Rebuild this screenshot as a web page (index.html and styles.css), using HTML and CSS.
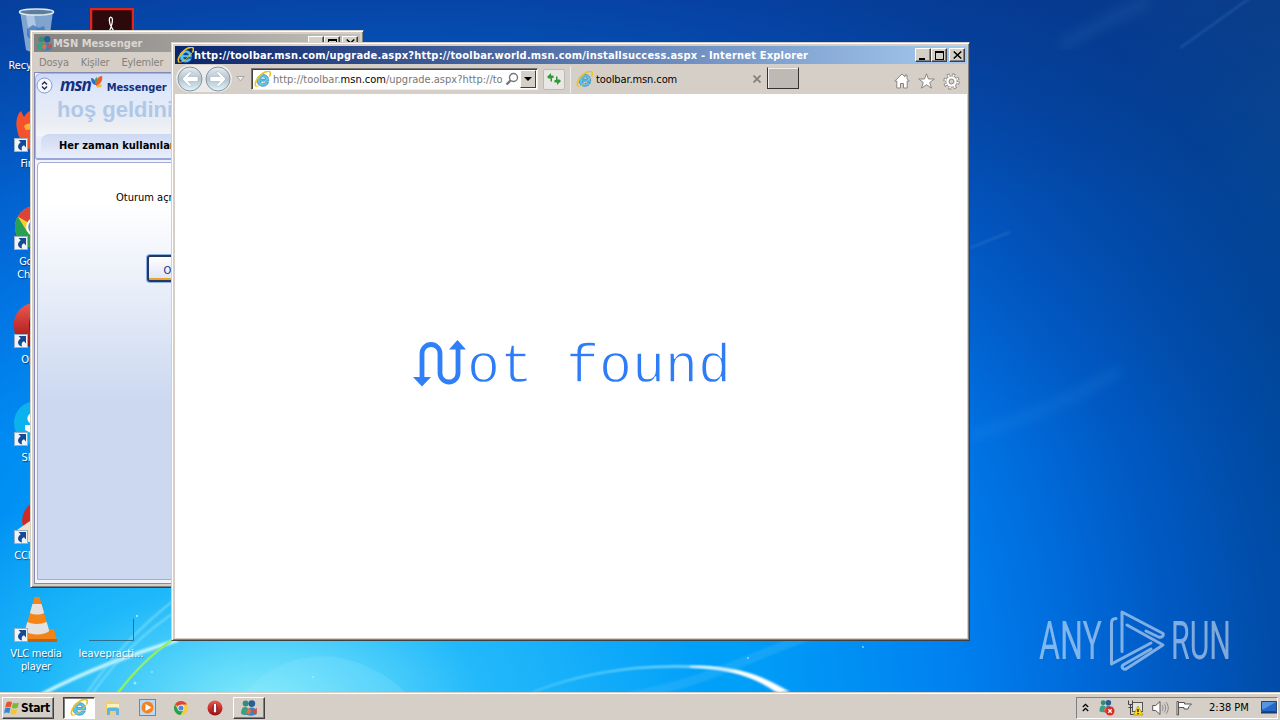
FILE: index.html
```html
<!DOCTYPE html>
<html lang="en">
<head>
    <meta charset="UTF-8">
    <meta name="viewport" content="width=device-width, initial-scale=1.0">
    <title>Desktop</title>
    <link rel="stylesheet" href="styles.css">
</head>
<body>

    <!-- Shared icons -->
    <svg width="0" height="0" class="sprite">
        <symbol id="ie" viewBox="0 0 16 16">
            <path d="M13.9 9.6H6c.2 1.500 1.100 2.300 2.500 2.300 1 0 1.700-.4 2.100-1.100h3c-.8 2.300-2.700 3.600-5.200 3.600-3.300 0-5.600-2.200-5.600-5.500S5.200 3.300 8.500 3.300c3.400 0 5.500 2.300 5.400 6.300zM6.100 7.600h4.800c-.2-1.300-1-2.100-2.400-2.100-1.300 0-2.200.8-2.400 2.100z" fill="#5cc3f0" stroke="#2480c2" stroke-width=".6"/>
            <path d="M2.300 14.500C-.6 12.800 3 6.200 7.200 3 11-.1 15-.6 15.400 1.800c.2 1-.2 2.100-.8 3" fill="none" stroke="#f2c21b" stroke-width="1.500"/>
            <path d="M2.300 14.500C5 14.500 10 11 14.500 5" fill="none" stroke="#f2c21b" stroke-width=".8"/>
        </symbol>
        <symbol id="shortcut" viewBox="0 0 14 14">
            <rect x=".5" y=".5" width="13" height="13" fill="#eef4fa" stroke="#9ab0c4"/>
            <path d="M4.500 2h7.500v7.500L10 7.300C8 8.200 7.200 9.600 8 12.500 3.500 11.500 2.500 7.300 6.700 4.300z" fill="#174a94"/>
        </symbol>
        <symbol id="msn" viewBox="0 0 16 16">
            <circle cx="5" cy="4" r="2.600" fill="#2f8f78"/>
            <path d="M1 13c0-4 1-6 3.500-6S8 9 8 13c-2 1.500-5 1.500-7 0z" fill="#36a184"/>
            <circle cx="10.500" cy="4" r="3" fill="#275f93"/>
            <path d="M6 14c0-4.500 1.500-6.500 4.500-6.500S15 10 15 13c-2 2-6 2.500-9 1z" fill="#3585c4"/>
            <path d="M7.500 8L5.500 12l3 2 1.500-4z" fill="#ee6e35"/>
            <path d="M11 10l4-2v4l-3 1z" fill="#d3503b"/>
        </symbol>
        <symbol id="chrome" viewBox="0 0 16 16">
            <circle cx="8" cy="8" r="7" fill="#f5cd35"/>
            <path d="M8 8L1.900 4.500A7 7 0 0 1 14.100 4.500H8z" fill="#db4437"/>
            <path d="M1.900 4.500A7 7 0 0 0 7.500 15L10.500 10 5 9.500z" fill="#28a052"/>
            <circle cx="8" cy="8" r="3.300" fill="#fff"/>
            <circle cx="8" cy="8" r="2.600" fill="#4a86e8"/>
        </symbol>
        <symbol id="opera" viewBox="0 0 16 16">
            <circle cx="8" cy="8" r="7.500" fill="url(#operaRed)"/>
            <ellipse cx="8" cy="8" rx="2.300" ry="5" fill="#7a0a0d"/>
            <rect x="6.800" y="3.600" width="2.400" height="8.800" rx="1.200" fill="#fff"/>
        </symbol>
        <linearGradient id="operaRed" x1="0" y1="0" x2="0" y2="1">
            <stop offset="0" stop-color="#ee5a52"/>
            <stop offset="1" stop-color="#9c0b10"/>
        </linearGradient>
        <linearGradient id="navGlass" x1="0" y1="0" x2="0" y2="1">
            <stop offset="0" stop-color="#e9edf0"/>
            <stop offset=".5" stop-color="#b5c3cd"/>
            <stop offset="1" stop-color="#dff6fc"/>
        </linearGradient>
    </svg>

    <main class="desktop">
        <svg class="wallpaper" viewBox="0 0 1280 692">
            <defs>
                <filter id="soft"><feGaussianBlur stdDeviation="1"/></filter>
                <filter id="softer"><feGaussianBlur stdDeviation="6"/></filter>
                <linearGradient id="arc" x1="0" y1="0" x2="1" y2="0">
                    <stop offset="0" stop-color="#5fd6ff" stop-opacity=".6"/>
                    <stop offset=".6" stop-color="#a5eaff"/>
                    <stop offset="1" stop-color="#fff"/>
                </linearGradient>
            </defs>
            <path d="M235 705C280 640 360 640 418 705z" fill="#9cecff" opacity=".2"/>
            <path d="M42 694C88 670 130 655 178 640" stroke="#c8f6ff" stroke-width="3.500" fill="none" filter="url(#soft)"/>
            <path d="M86 694C110 660 135 630 178 597M92 694C120 655 145 632 178 610" stroke="#8fe6fb" stroke-width="1.300" fill="none" filter="url(#soft)"/>
            <path d="M117 694C134 672 150 655 175 638" stroke="#8fee6a" stroke-width="2.500" fill="none"/>
            <path d="M533 692C600 666 660 665 700 667 740 669 765 680 782 692" stroke="url(#arc)" stroke-width="1.800" fill="none" filter="url(#soft)"/>
            <path d="M690 666C745 666 765 678 790 692H776C755 678 735 669 690 667z" fill="#fff" filter="url(#soft)"/>
            <path d="M630 696C720 680 770 645 830 630" stroke="#6cc8ff" stroke-width="9" opacity=".2" fill="none" filter="url(#soft)"/>
            <path d="M970 436C1030 418 1080 395 1120 370" stroke="#4ab0ff" stroke-width="9" opacity=".15" fill="none" filter="url(#softer)"/>
            <path d="M970 248L1010 232M1180 48L1250 -2" stroke="#5aa0d8" stroke-width="2" opacity=".25" filter="url(#soft)"/>
            <path d="M1060 45L1150 0" stroke="#4a90c8" stroke-width="12" opacity=".15" filter="url(#softer)"/>
            <g fill="#b9f1ff" opacity=".7">
                <circle cx="135" cy="683" r="1.500"/><circle cx="137" cy="616" r="1.200"/><circle cx="313" cy="677" r="1"/>
                <circle cx="748" cy="658" r="1"/><circle cx="863" cy="647" r="1"/><circle cx="152" cy="672" r="1"/>
            </g>
        </svg>

        <!-- Desktop shortcuts -->
        <div class="shortcuts">
            <div class="shortcut">
                <svg class="shortcut-icon" viewBox="0 0 48 48">
                    <path d="M8 4h33l-5 39c-5 3-17 3-22 0z" fill="#a9c4dc" opacity=".75"/>
                    <path d="M14 8l5 32 9 1-6-33z" fill="#dce9f3" opacity=".5"/>
                    <path d="M15 22l6-4 6 3 5-2 2 8-4 7H20l-5-5z" fill="#2d6fc6" opacity=".7"/>
                    <ellipse cx="24.500" cy="5" rx="17" ry="3" fill="#5c7e9d" stroke="#dfe8ee" stroke-width="1.500"/>
                </svg>
                <p>Recycle Bin</p>
            </div>
            <div class="shortcut">
                <svg class="shortcut-icon" viewBox="0 0 48 48">
                    <path d="M5 24C3 16 6 8 9 6l3 6c2-3 4-6 9-7l10 1c12 3 15 15 12 24s-11 16-19 16S7 38 5 24z" fill="#f4512c"/>
                    <path d="M12 21c4-4 9-2 14-2l-4 5-8 1 3 7z" fill="#ffb13c"/>
                </svg>
                <svg class="link-mark"><use href="#shortcut"/></svg>
                <p>Firefox</p>
            </div>
            <div class="shortcut">
                <svg class="shortcut-icon"><use href="#chrome"/></svg>
                <svg class="link-mark"><use href="#shortcut"/></svg>
                <p>Google Chrome</p>
            </div>
            <div class="shortcut">
                <svg class="shortcut-icon"><use href="#opera"/></svg>
                <svg class="link-mark"><use href="#shortcut"/></svg>
                <p>Opera</p>
            </div>
            <div class="shortcut">
                <svg class="shortcut-icon" viewBox="0 0 48 48">
                    <circle cx="24" cy="24" r="22" fill="#0cb2ee"/>
                    <path d="M31 12c-9-2-18 4-15 10l3 4h-6v5l10 5 13-4z" fill="#fff"/>
                </svg>
                <svg class="link-mark"><use href="#shortcut"/></svg>
                <p>Skype</p>
            </div>
            <div class="shortcut">
                <svg class="shortcut-icon" viewBox="0 0 48 48">
                    <path d="M10 26C10 12 18 6 26 4l14 8-6 24-20-4z" fill="#cf2a25"/>
                    <path d="M5 33l13-9 16 4-8 17H8z" fill="#f1dfc8"/>
                </svg>
                <svg class="link-mark"><use href="#shortcut"/></svg>
                <p>CCleaner</p>
            </div>
            <div class="shortcut">
                <svg class="shortcut-icon" viewBox="0 0 48 48">
                    <path d="M8 34h34l3 12H5z" fill="#f08419"/>
                    <path d="M5 44h40v3H5z" fill="#c8600a"/>
                    <path d="M22.500 2h5l10 35c-5 5-20 5-25 0z" fill="#f58516"/>
                    <path d="M20.500 9h9l2.600 9c-4 2-10 2-14.200 0zM15.300 27c6 2.500 13 2.500 19.400 0l2.600 9c-5 4.500-19 4.500-24.600 0z" fill="#e2e2e2"/>
                </svg>
                <svg class="link-mark"><use href="#shortcut"/></svg>
                <p>VLC media player</p>
            </div>
        </div>

        <div class="acrobat">
            <svg width="44" height="44" viewBox="0 0 44 44">
                <rect x="1" y="1" width="42" height="42" fill="#2c0a0c" stroke="#e5251b" stroke-width="2.500"/>
                <path d="M19 24c2-4 5-13 2.500-14.500S18 14 22 20l3 5" fill="none" stroke="#fff" stroke-width="1.300"/>
            </svg>
        </div>
        <div class="ghost-file">
            <span class="ghost-icon"></span>
            <p>leavepracti...</p>
        </div>

        <!-- Messenger window -->
        <section class="window messenger">
            <header class="titlebar inactive">
                <svg class="title-icon"><use href="#msn"/></svg>
                <h2>MSN Messenger</h2>
                <div class="win-buttons">
                    <span class="win-btn"><i class="glyph-min"></i></span><span class="win-btn"><i class="glyph-max"></i></span><span class="win-btn close"><svg width="9" height="8" viewBox="0 0 9 8"><path d="M.7.500l7.600 7M8.300.500l-7.600 7" stroke="#000" stroke-width="1.500"/></svg></span>
                </div>
            </header>
            <nav class="menu">
                <span>Dosya</span><span>Kişiler</span><span>Eylemler</span>
            </nav>
            <div class="msn-frame">
                <div class="msn-head">
                    <div class="msn-brand">
                        <svg width="17" height="17" viewBox="0 0 17 17">
                            <circle cx="8.500" cy="8.500" r="7.500" fill="#f4f7fd" stroke="#8a98cf"/>
                            <path d="M6 7.500l2.500-2.500L11 7.500M6 9.500l2.500 2.500L11 9.500" fill="none" stroke="#222c4c" stroke-width="1.400"/>
                        </svg>
                        <span class="msn-word">msn</span>
                        <svg class="butterfly" width="12" height="13" viewBox="0 0 12 13">
                            <path d="M5 9C1 9 0 5 0 2c3 0 5 3 5 7z" fill="#2e6fc6"/>
                            <path d="M5 9C3 5 4 2 6 1c1 3 1 6-1 8z" fill="#3fa45a"/>
                            <path d="M5 10C5 4 7 0 11 0c1 4-1 8-6 10z" fill="#ee5c24"/>
                            <path d="M5 11c2-3 5-3 6-2-1 3-3 3-6 2z" fill="#f6b628"/>
                        </svg>
                        <span class="msn-name">Messenger</span>
                    </div>
                    <p class="welcome">hoş geldiniz</p>
                    <p class="msn-tab">Her zaman kullanılan</p>
                </div>
                <div class="msn-body">
                    <p>Oturum açmak</p>
                    <button class="msn-button">Oturum Aç</button>
                </div>
            </div>
        </section>

        <!-- Browser window -->
        <section class="window browser">
            <header class="titlebar">
                <svg class="title-icon"><use href="#ie"/></svg>
                <h2>http://toolbar.msn.com/upgrade.aspx?http://toolbar.world.msn.com/installsuccess.aspx - Internet Explorer</h2>
                <div class="win-buttons">
                    <span class="win-btn"><i class="glyph-min"></i></span><span class="win-btn"><i class="glyph-max"></i></span><span class="win-btn close"><svg width="9" height="8" viewBox="0 0 9 8"><path d="M.7.500l7.600 7M8.300.500l-7.600 7" stroke="#000" stroke-width="1.500"/></svg></span>
                </div>
            </header>
            <div class="toolbar">
                <svg class="nav-buttons" width="58" height="30" viewBox="0 0 58 30">
                    <rect x="1" y="1" width="56" height="27" rx="13.500" fill="#ecebe9"/>
                    <g fill="url(#navGlass)" stroke="#8496a5">
                        <circle cx="15" cy="15" r="12"/>
                        <circle cx="43" cy="15" r="12"/>
                    </g>
                    <g fill="#fff" stroke="#9aacb9" stroke-width=".5">
                        <path d="M7 15l7-7h3.500L13 12.500h10v5H13l4.500 4.500H14z"/>
                        <path d="M51 15l-7-7h-3.500l4.500 4.500H35v5h10L40.500 22H44z"/>
                    </g>
                </svg>
                <svg class="nav-more" width="9" height="6" viewBox="0 0 9 6"><path d="M.8.500h7.400L4.500 5z" fill="#eee" stroke="#aaa6a0"/></svg>
                <div class="address">
                    <svg class="address-icon"><use href="#ie"/></svg>
                    <p>http://toolbar.<b>msn.com</b>/upgrade.aspx?http://to</p>
                    <svg class="search" width="14" height="14" viewBox="0 0 14 14"><circle cx="8.500" cy="5.500" r="4" fill="none" stroke="#777" stroke-width="1.400"/><path d="M5.500 8.500L1.500 12.500" stroke="#777" stroke-width="2.400"/></svg>
                    <span class="dropdown"><i></i></span>
                </div>
                <span class="refresh">
                    <svg width="14" height="14" viewBox="0 0 14 14"><path d="M0 5L4 1v2.500h2.500V6H5v3.500H3.500V6.500H1.500zM14 9l-4 4v-2.500H7.500V8H9V4.500h1.500v3h2z" fill="#2d9a35"/></svg>
                </span>
                <div class="tab">
                    <svg class="tab-icon"><use href="#ie"/></svg>
                    <p>toolbar.msn.com</p>
                    <svg width="8" height="8" viewBox="0 0 8 8"><path d="M.5.500l7 7M7.500.500l-7 7" stroke="#858079" stroke-width="1.800"/></svg>
                </div>
                <span class="new-tab"></span>
                <div class="tools">
                    <svg width="16" height="16" viewBox="0 0 16 16"><path d="M8 1L.8 8h2v7h3.700v-4.500h3V15h3.700V8h2L13 5.800V2h-2v1.900z" fill="#fff" stroke="#8a857f"/></svg>
                    <svg width="17" height="16" viewBox="0 0 17 16"><path d="M8.500.8l2 5.200h5.800l-4.600 3.500 1.800 5.700-5-3.500-5 3.500 1.800-5.700L.7 6h5.800z" fill="#fff" stroke="#8a857f"/></svg>
                    <svg width="17" height="17" viewBox="0 0 17 17">
                        <circle cx="8.500" cy="8.500" r="6.300" fill="none" stroke="#8a857f" stroke-width="3.800" stroke-dasharray="2.600 2.348"/>
                        <circle cx="8.500" cy="8.500" r="6" fill="#8a857f"/>
                        <circle cx="8.500" cy="8.500" r="6.300" fill="none" stroke="#fff" stroke-width="2" stroke-dasharray="1.600 3.348" stroke-dashoffset="-.5"/>
                        <circle cx="8.500" cy="8.500" r="5.200" fill="#fff"/>
                        <circle cx="8.500" cy="8.500" r="2.500" fill="#d4d0c8" stroke="#8a857f"/>
                    </svg>
                </div>
            </div>
            <div class="page">
                <svg width="54" height="48" viewBox="0 0 54 48">
                    <path d="M9 38V13.500a9 9 0 0 1 18 0v19.500a9 9 0 0 0 18 0V9" fill="none" stroke="#2f80f8" stroke-width="4.800"/>
                    <path d="M0 37h18l-9 9.500zM36 9.500h17L44.500 0z" fill="#2f80f8"/>
                </svg>
                <h1>ot found</h1>
            </div>
        </section>

        <!-- Watermark -->
        <svg class="watermark" width="196" height="66" viewBox="0 0 196 66">
            <g opacity=".5">
                <text x="1" y="51" textLength="63" lengthAdjust="spacingAndGlyphs">ANY</text>
                <g fill="none" stroke="#fff" stroke-width="3" stroke-linejoin="round" stroke-linecap="round">
                    <path d="M78 10.500C75 10.500 73.500 12 73.500 15V56L113 35"/>
                    <path d="M84 43.500V4L125 25.500C126 27.500 124 30 120.500 29L108 23"/>
                    <path d="M89 17L125 37 88 61C85 62 83 59 85 57L113 41"/>
                </g>
                <text x="133" y="51" textLength="60" lengthAdjust="spacingAndGlyphs">RUN</text>
            </g>
        </svg>
    </main>

    <footer class="taskbar">
        <button class="start">
            <svg width="16" height="16" viewBox="0 0 16 16">
                <path d="M2.500 2.500C4.500 1 6 1.300 8 2.300L6.700 7.300C4.800 6.300 3 6.500 1.200 7.500z" fill="#e8542a"/>
                <path d="M9 2.700c2 1 4 .8 6-.3l-1.300 5c-2 1.200-4 1.300-6 .3z" fill="#7db83a"/>
                <path d="M1 8.500c2-1.200 3.500-1.200 5.500-.2L5.200 13.300C3.300 12.300 1.700 12.400 0 13.500z" fill="#3a83d2"/>
                <path d="M7.500 8.800c2 1 4 .9 6-.2l-1.300 5c-2 1.200-4 1.200-6 .2z" fill="#f8c62c"/>
            </svg>
            Start
        </button>
        <div class="tasks">
            <span class="task active"><svg width="18" height="18"><use href="#ie"/></svg></span>
            <span class="task">
                <svg width="16" height="16" viewBox="0 0 16 16">
                    <path d="M1 3l1-2h5l1 1.500h6.500V13H1z" fill="#f0cf67"/>
                    <path d="M2 4h12v5H2z" fill="#fbf2bd"/>
                    <path d="M2 14V9.500C2 8 3 7.500 4.500 7.500h7c1.500 0 2.500.5 2.500 2V15h-3v-4H5v4H2z" fill="#62b4dd"/>
                </svg>
            </span>
            <span class="task">
                <svg width="17" height="17" viewBox="0 0 17 17">
                    <rect x=".5" y=".5" width="16" height="16" fill="#b9d9f4" stroke="#4f8fcb"/>
                    <circle cx="8.500" cy="8.500" r="6" fill="#f5821e"/>
                    <path d="M6.500 5l6 3.500-6 3.500z" fill="#fff"/>
                </svg>
            </span>
            <span class="task"><svg width="16" height="16"><use href="#chrome"/></svg></span>
            <span class="task"><svg width="16" height="16"><use href="#opera"/></svg></span>
            <span class="task raised"><svg width="18" height="18"><use href="#msn"/></svg></span>
        </div>
        <div class="tray">
            <svg width="7" height="9" viewBox="0 0 7 9"><path d="M.8 4l2.700-2.700L6.200 4M.8 8l2.700-2.700L6.200 8" fill="none" stroke="#000" stroke-width="1.300"/></svg>
            <svg class="tray-msn" width="17" height="17" viewBox="0 0 17 17">
                <use href="#msn" width="16" height="15"/>
                <circle cx="12" cy="12" r="4.500" fill="#dd2c22"/>
                <path d="M10.300 10.300l3.400 3.400M13.700 10.300l-3.400 3.400" stroke="#fff" stroke-width="1.300"/>
            </svg>
            <svg class="tray-net" width="17" height="16" viewBox="0 0 17 16">
                <rect x="5.500" y="2.500" width="10" height="9" fill="#e4e2df" stroke="#555"/>
                <path d="M1.500.500v4h4v-4M3.500 5v9.500h4M1.500 7.500h4" fill="none" stroke="#444"/>
                <path d="M11 6l5 9H6.500z" fill="#ffd91c" stroke="#9a8405" stroke-width=".6"/>
                <path d="M11 9v3M11 13v1.200" stroke="#000" stroke-width="1.200"/>
            </svg>
            <svg class="tray-sound" width="17" height="16" viewBox="0 0 17 16">
                <path d="M.7 5.500h3L8 1.500v13l-4.300-4h-3z" fill="#fff" stroke="#555"/>
                <path d="M10 5c1.300 2 1.300 4 0 6M12 3.500c2.200 3 2.200 6 0 9M14 2c3 4 3 8 0 12" fill="none" stroke="#888"/>
            </svg>
            <svg class="tray-flag" width="17" height="16" viewBox="0 0 17 16"><path d="M1 1.500h1.500V15H1zM2.500 2.500h6V4h7l-2.500 2.500-1 2.500H8V7.500H2.500z" fill="#fff" stroke="#555"/></svg>
            <time>2:38 PM</time>
            <svg class="tray-desktop" width="16" height="13" viewBox="0 0 16 13"><path d="M.5.500h15v10H.5z" fill="#2467c4" stroke="#254470"/><path d="M1 1h14L3 8H1z" fill="#5594df"/><path d="M0 11h16v1.500H0z" fill="#173a72"/></svg>
        </div>
    </footer>

</body>
</html>
```
FILE: styles.css
```css
/* Reset default styles */
* {
    box-sizing: border-box;
    margin: 0;
    padding: 0;
}

body {
    display: grid;
    grid-template-rows: 692px 28px;
    width: 1280px;
    height: 720px;
    overflow: hidden;
    font-family: "DejaVu Sans Condensed", "DejaVu Sans", sans-serif;
    font-stretch: condensed;
    font-size: 11px;
    line-height: 13px;
    color: #000;
}

svg {
    display: block;
    flex: none;
}

.sprite {
    position: absolute;
}

/* Desktop */
.desktop {
    position: relative;
    overflow: hidden;
    background:
        radial-gradient(ellipse 440px 230px at 260px 700px, rgba(135, 238, 250, 0.95), rgba(50, 200, 250, 0.6) 50%, transparent),
        linear-gradient(rgba(10, 50, 140, 0.6), rgba(10, 60, 160, 0.25) 200px, transparent 440px),
        radial-gradient(circle at 400px 720px, #10a4fb 0, #00a0f8 340px, #0080f0 560px, #006cdc 670px, #005ac4 770px, #004ca8 880px, #004594 980px, #0b5088 1140px);
}

.wallpaper {
    position: absolute;
    inset: 0;
    width: 1280px;
    height: 692px;
}

.shortcuts {
    position: absolute;
    top: 7px;
    left: 0;
    width: 72px;
}

.shortcut {
    position: relative;
    height: 98px;
    color: #fff;
    text-align: center;
    text-shadow: 1px 1px 1px rgba(0, 20, 60, 0.6);
}

.shortcut p {
    width: 60px;
    margin: 4px auto 0;
    letter-spacing: -0.2px;
}

.shortcut:first-child p {
    width: 72px;
}

.shortcut-icon {
    width: 48px;
    height: 48px;
    margin: 0 auto;
}

.link-mark {
    position: absolute;
    left: 14px;
    top: 33px;
    width: 14px;
    height: 14px;
}

.acrobat {
    position: absolute;
    left: 90px;
    top: 8px;
}

.ghost-file {
    position: absolute;
    left: 72px;
    top: 619px;
    width: 78px;
    text-align: center;
    color: #fff;
    text-shadow: 1px 1px 1px rgba(0, 60, 120, 0.5);
}

.ghost-icon {
    display: block;
    width: 45px;
    height: 22px;
    margin: 0 auto 6px 17px;
    border: solid #2c6f94;
    border-width: 0 1px 1px 0;
}

/* Windows */
.window {
    position: absolute;
    display: flex;
    flex-direction: column;
    padding: 2px;
    background: #d6cfc8;
    border: 1px solid;
    border-color: #d4d0c8 #404040 #404040 #d4d0c8;
    box-shadow: inset 1px 1px #fff, inset -1px -1px #808080;
}

.messenger {
    left: 30px;
    top: 30px;
    width: 334px;
    height: 558px;
    padding: 3px;
}

.browser {
    left: 171px;
    top: 42px;
    width: 799px;
    height: 599px;
    padding: 3px 2px 2px 3px;
}

.titlebar {
    display: flex;
    align-items: center;
    flex: none;
    height: 18px;
    padding: 0 2px;
    color: #fff;
    background: linear-gradient(90deg, #0a246a, #a6caf0);
}

.titlebar.inactive {
    color: #dad6d0;
    background: linear-gradient(90deg, #848280, #c4c0ba);
}

.titlebar h2 {
    flex: 1;
    font-size: 11px;
    letter-spacing: 0.2px;
    white-space: nowrap;
}

.titlebar.inactive h2 {
    letter-spacing: 0;
}

.title-icon {
    width: 17px;
    height: 17px;
}

.win-buttons {
    display: flex;
}

.win-btn {
    display: flex;
    align-items: center;
    justify-content: center;
    width: 16px;
    height: 14px;
    background: #d4d0c8;
    border: 1px solid;
    border-color: #fff #404040 #404040 #fff;
    box-shadow: inset -1px -1px #808080;
}

.win-btn.close {
    margin-left: 2px;
}

.glyph-min {
    width: 6px;
    height: 2px;
    margin: 7px 2px 0 0;
    background: #000;
}

.glyph-max {
    width: 9px;
    height: 9px;
    border: 1px solid #000;
    border-top-width: 2px;
}

/* Messenger */
.menu {
    display: flex;
    flex: none;
    gap: 12px;
    height: 20px;
    padding: 4px 5px 3px;
    letter-spacing: -0.2px;
    color: #85817c;
}

.msn-frame {
    flex: 1;
    display: flex;
    flex-direction: column;
    padding: 0 2px 3px;
    background: #f2f4fc;
    border: 1px solid #8388b4;
}

.msn-head {
    flex: none;
    height: 87px;
    margin-left: -2px;
    border: 1px solid #a8b0e2;
    border-bottom: 2px solid #9aa5dc;
    border-radius: 6px 6px 3px 3px;
    background: linear-gradient(#cfdcf8 0, #dfe8fa 18px, #eaedf2 50px, #f4f5f8 62px, #e8edfa 63px);
}

.msn-brand {
    display: flex;
    align-items: center;
    height: 22px;
    color: #13307c;
    font-weight: bold;
}

.msn-word {
    margin-left: 7px;
    font: italic bold 17px/18px "Open Sans", sans-serif;
    letter-spacing: -1px;
}

.butterfly {
    margin: -6px 4px 0 0;
}

.msn-name {
    padding-top: 4px;
    letter-spacing: -0.1px;
}

.welcome {
    padding-left: 21px;
    font: bold 22px/28px "Liberation Sans", sans-serif;
    color: #b0c8e8;
}

.msn-tab {
    height: 24px;
    margin: 10px 0 0 5px;
    padding: 5px 18px;
    font-weight: bold;
    white-space: nowrap;
    border-radius: 8px 0 0;
    background: linear-gradient(#cdd9f2, #e9effb);
}

.msn-body {
    flex: 1;
    margin-top: 2px;
    padding: 28px 0 0 78px;
    border: 1px solid #a3abd9;
    border-radius: 4px 4px 0 0;
    background: linear-gradient(#fff 0, #fff 40px, #cbd8f0 240px);
}

.msn-button {
    display: block;
    width: 86px;
    height: 27px;
    margin: 51px 0 0 31px;
    padding: 3px 0 0;
    font: inherit;
    color: #13307c;
    white-space: nowrap;
    background: linear-gradient(#fff, #dfe3f6);
    border: 2px solid #263764;
    border-radius: 3px;
    box-shadow: inset 0 -2px #e5a52a, 0 0 0 1px #8fb1e2;
}

/* Browser */
.toolbar {
    display: flex;
    align-items: center;
    flex: none;
    height: 30px;
}

.nav-more {
    margin-left: 3px;
}

.address {
    display: flex;
    align-items: center;
    width: 287px;
    height: 22px;
    margin-left: 6px;
    padding: 1px;
    background: #fff;
    border: 1px solid;
    border-color: #777 #eee #eee #777;
    box-shadow: inset 1px 1px #404040;
}

.address-icon {
    width: 17px;
    height: 17px;
    margin-left: 1px;
}

.address p {
    width: 230px;
    margin-left: 2px;
    white-space: nowrap;
    color: #777;
}

.address b {
    font-weight: normal;
    color: #000;
}

.search {
    margin: 0 1px 0 2px;
}

.dropdown {
    display: flex;
    align-items: center;
    justify-content: center;
    flex: 1;
    height: 18px;
    background: #d4d0c8;
    border: 1px solid;
    border-color: #fff #404040 #404040 #fff;
}

.dropdown i {
    border: 4px solid transparent;
    border-top-color: #000;
    border-bottom: 0;
}

.refresh {
    display: grid;
    place-items: center;
    width: 22px;
    height: 21px;
    margin-left: 5px;
    background: #e9e7e3;
    border: 1px solid #bdb9b3;
    border-radius: 2px;
}

.tab {
    display: flex;
    align-items: center;
    width: 197px;
    height: 27px;
    margin-left: 5px;
    padding: 0 6px 0 5px;
    border-left: 1px solid #eee;
}

.tab p {
    flex: 1;
    margin-left: 3px;
    letter-spacing: -0.1px;
}

.tab-icon {
    width: 17px;
    height: 17px;
}

.new-tab {
    width: 32px;
    height: 22px;
    margin-top: -2px;
    background: #bfb9b3;
    border: 1px solid;
    border-color: #ccc #333 #333;
    box-shadow: inset 1px 1px #eee;
}

.tools {
    display: flex;
    align-items: center;
    gap: 8px;
    margin: 4px 7px 0 auto;
}

.page {
    flex: 1;
    display: flex;
    padding: 246px 0 0 238px;
    background: #fff;
}

/* White outline trims the strokes to a lighter weight */
.page h1 {
    margin-top: 1px;
    font: normal 55px/54px "Liberation Mono", monospace;
    color: #2f7df6;
    -webkit-text-stroke: 1.300px #fff;
}

.watermark {
    position: absolute;
    left: 1038px;
    top: 608px;
    fill: #fff;
    font: 400 53px Roboto, sans-serif;
}

/* Taskbar */
.taskbar {
    display: flex;
    align-items: center;
    padding: 2px 2px 0;
    background: #d6cfc8;
    border-top: 1px solid #d4d0c8;
    box-shadow: inset 0 1px #fff;
}

.start {
    display: flex;
    align-items: center;
    gap: 1px;
    width: 52px;
    height: 22px;
    padding: 0 1px;
    font: bold 12px/14px "DejaVu Sans Condensed", sans-serif;
    letter-spacing: -0.4px;
    color: #000;
    background: #d4d0c8;
    border: 1px solid;
    border-color: #fff #404040 #404040 #fff;
    box-shadow: inset -1px -1px #808080;
}

.tasks {
    display: flex;
    gap: 2px;
    margin-left: 9px;
}

.task {
    display: grid;
    place-items: center;
    width: 32px;
    height: 22px;
}

.task.active {
    background: #fff;
    border: 1px solid;
    border-color: #404040 #fff #fff #404040;
    box-shadow: inset 1px 1px #808080;
}

.task.raised {
    border: 1px solid;
    border-color: #fff #404040 #404040 #fff;
    box-shadow: inset -1px -1px #808080;
}

.tray {
    display: flex;
    align-items: center;
    width: 202px;
    height: 22px;
    margin-left: auto;
    padding-left: 5px;
    border: 1px solid;
    border-color: #808080 #fff #fff #808080;
}

.tray-msn {
    margin-left: 9px;
}

.tray-net {
    margin-left: 12px;
}

.tray-sound {
    margin-left: 8px;
}

.tray-flag {
    margin-left: 7px;
}

.tray time {
    margin-left: 16px;
    white-space: nowrap;
}

.tray-desktop {
    margin-left: auto;
}
```
